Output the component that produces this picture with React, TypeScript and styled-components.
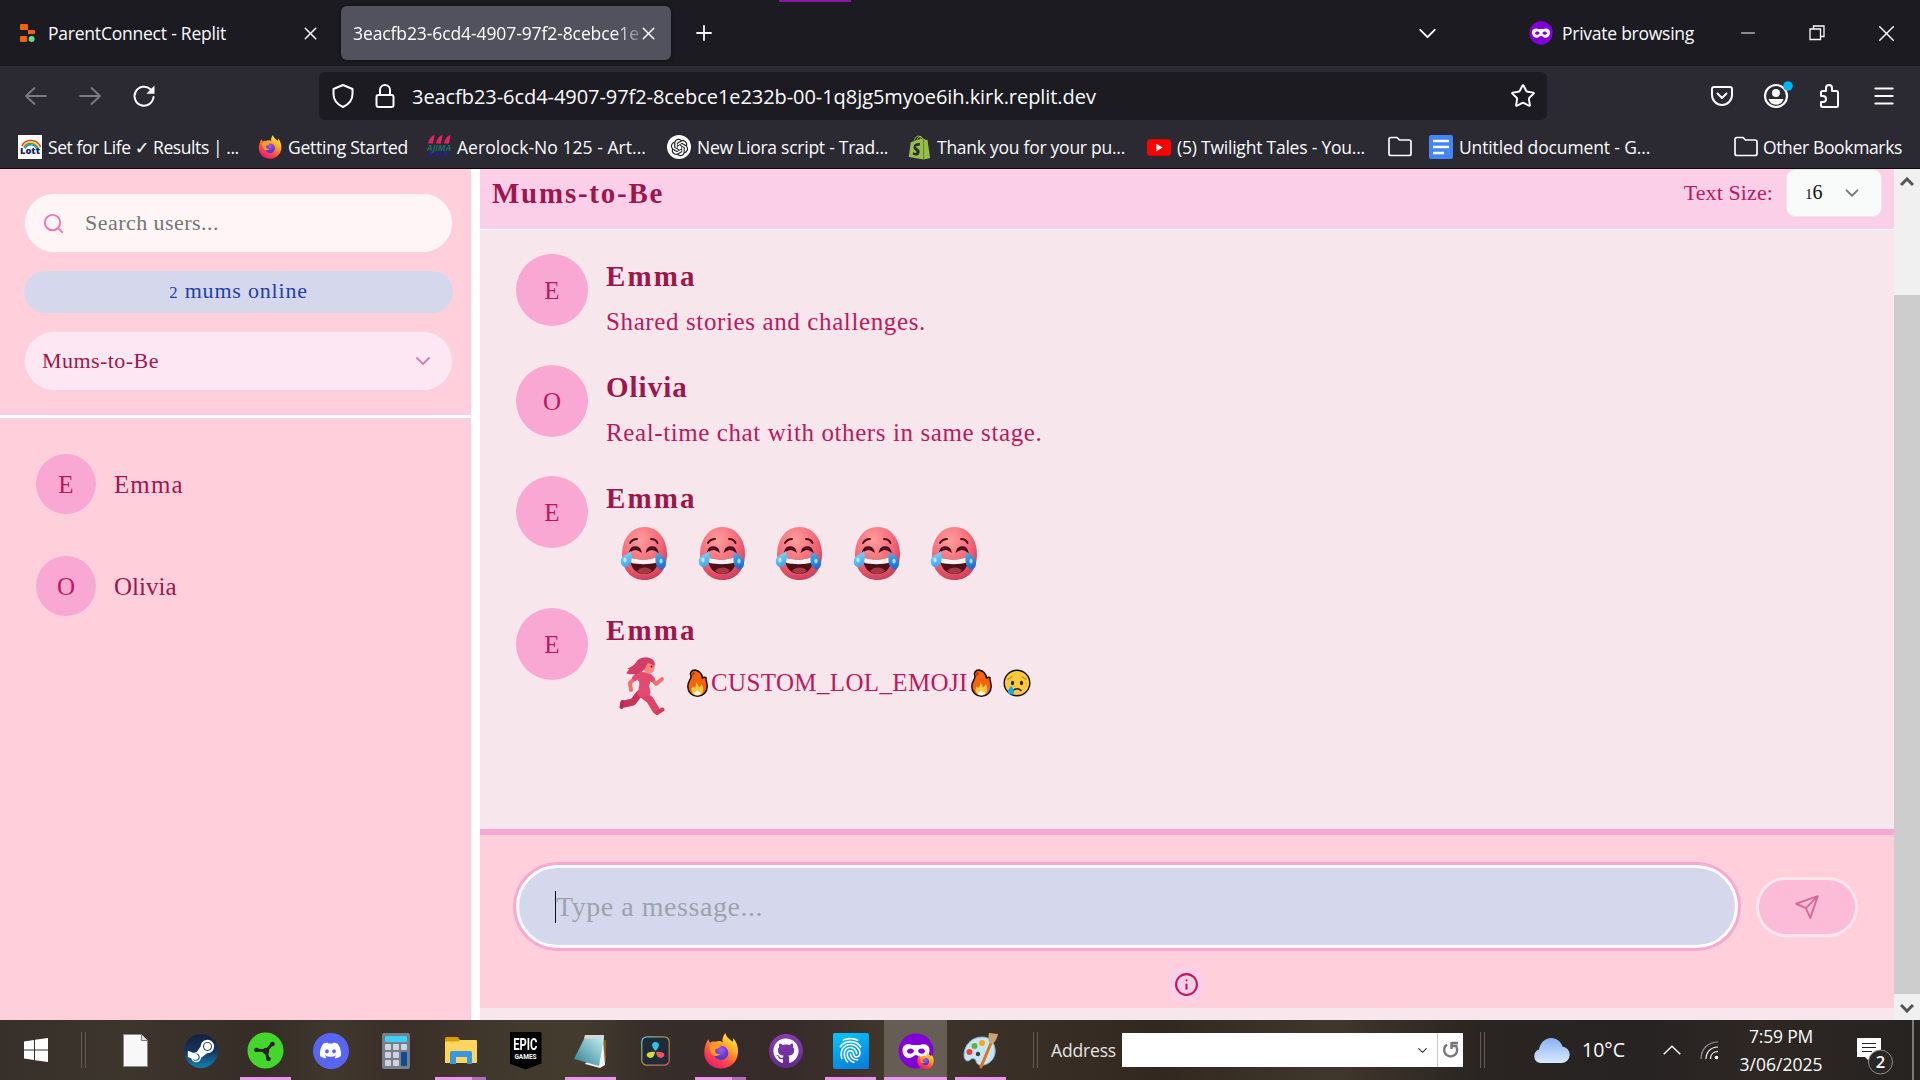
import React from "react";
import styled, { createGlobalStyle } from "styled-components";
import { ChevronDown, Search, Info, Plus, X, Minus, Menu, Star } from "lucide-react";
import { FaSteamSymbol, FaDiscord, FaGithub, FaShopify } from "react-icons/fa";
import { IoFingerPrint } from "react-icons/io5";
import { RiOpenaiFill } from "react-icons/ri";

const serif = "'Liberation Serif', serif";
const sans = "'Open Sans', 'DejaVu Sans', sans-serif";

const Global = createGlobalStyle`
  * { box-sizing: border-box; }
  body { margin: 0; overflow: hidden; background: #1c1b22; }
  svg { display: block; flex: none; }
`;

const Screen = styled.div`
  width: 1920px;
  height: 1080px;
  display: flex;
  flex-direction: column;
  overflow: hidden;
  font-family: ${sans};
`;

const Ui = styled.span<{ $ls?: number; $size?: number }>`
  font-size: ${(p) => p.$size ?? 17.5}px;
  letter-spacing: ${(p) => p.$ls ?? 0}px;
  line-height: 24px;
  white-space: nowrap;
  color: #fbfbfe;
`;

/* ---------- browser chrome ---------- */

const TabStrip = styled.header`
  height: 66px;
  flex: none;
  display: flex;
  align-items: center;
  background: #1c1b22;
  color: #fbfbfe;
`;

const Tab = styled.div<{ $active?: boolean }>`
  width: ${(p) => (p.$active ? 330 : 341)}px;
  height: 54px;
  padding-left: ${(p) => (p.$active ? 12 : 20)}px;
  display: flex;
  align-items: center;
  border-radius: 6px;
  background: ${(p) => (p.$active ? "#52525e" : "transparent")};
  box-shadow: ${(p) => (p.$active ? "0 0 4px rgba(0,0,0,.5)" : "none")};
`;

const TabTitle = styled(Ui)<{ $fade?: boolean }>`
  width: ${(p) => (p.$fade ? 286 : 248)}px;
  margin-left: ${(p) => (p.$fade ? 0 : 12)}px;
  margin-right: ${(p) => (p.$fade ? -1 : 4)}px;
  mask-image: ${(p) => (p.$fade ? "linear-gradient(90deg,#000 262px,rgba(0,0,0,.25) 286px)" : "none")};
`;

const NewTab = styled.div`
  margin-left: 21px;
  width: 54px;
`;

const PurpleMark = styled.div`
  align-self: flex-start;
  margin-left: 33px;
  width: 72px;
  height: 2px;
  background: #8a189e;
`;

const TabTools = styled.div`
  margin-left: auto;
  display: flex;
  align-items: center;
  padding-right: 21px;
`;

const Slot = styled.div<{ $w: number }>`
  width: ${(p) => p.$w}px;
  flex: none;
  display: flex;
  justify-content: center;
`;

const PrivateLabel = styled.div`
  display: flex;
  align-items: center;
  gap: 9px;
  margin: 0 41px 0 87px;
`;

const Toolbar = styled.div`
  height: 60px;
  flex: none;
  display: flex;
  align-items: center;
  padding: 6px 9px;
  background: #2b2a33;
  color: #fbfbfe;
`;

const NavButtons = styled.div`
  width: 310px;
  display: flex;
`;

const UrlBar = styled.div`
  width: 1228px;
  height: 48px;
  display: flex;
  align-items: center;
  padding: 0 11px 0 10px;
  border-radius: 6px;
  background: #1c1b22;
`;

const UrlText = styled(Ui)`
  flex: 1;
  margin-left: -1px;
  padding-top: 2px;
`;

const ToolbarEnd = styled.div`
  margin-left: auto;
  display: flex;
  align-items: center;
`;

const Bookmarks = styled.nav`
  height: 43px;
  flex: none;
  display: flex;
  align-items: center;
  padding: 0 18px;
  background: #2b2a33;
  border-bottom: 1px solid #0c0c0d;
`;

const Bookmark = styled.div<{ $w: number }>`
  width: ${(p) => p.$w}px;
  display: flex;
  align-items: center;
  gap: 6px;
`;

const BookmarkTail = styled.div`
  margin-left: auto;
  display: flex;
  align-items: center;
  gap: 5px;
`;

/* ---------- page ---------- */

const Page = styled.div`
  height: 851px;
  flex: none;
  display: flex;
  font-family: ${serif};
`;

const Sidebar = styled.aside`
  width: 480px;
  flex: none;
  border-right: 9px solid #fff;
  background: #ffd0dc;
`;

const Filters = styled.div`
  height: 249px;
  padding: 24px 18px 0 24px;
  border-bottom: 3px solid #fff;
  display: flex;
  flex-direction: column;
`;

const Pill = styled.div<{ $tone: "search" | "select" }>`
  height: 60px;
  display: flex;
  align-items: center;
  justify-content: ${(p) => (p.$tone === "select" ? "space-between" : "flex-start")};
  padding: 0 17px;
  border: 1px solid #fbd3e9;
  border-radius: 30px;
  background: ${(p) => (p.$tone === "search" ? "#fff5f6" : "#fce7f3")};
`;

const OnlineBadge = styled.div`
  height: 42px;
  margin: 18px 0 18px;
  display: flex;
  align-items: center;
  justify-content: center;
  border-radius: 21px;
  background: #d5d8ec;
`;

const Copy = styled.span<{ $size?: number; $ls?: number; $color?: string; $bold?: boolean }>`
  font-family: ${serif};
  font-size: ${(p) => p.$size ?? 22}px;
  letter-spacing: ${(p) => p.$ls ?? 0}px;
  color: ${(p) => p.$color ?? "#be185d"};
  font-weight: ${(p) => (p.$bold ? 700 : 400)};
  line-height: 30px;
  white-space: nowrap;
`;

const SmallDigit = styled.span`
  font-size: 0.76em;
`;

const SearchHint = styled(Copy)`
  margin-left: 20px;
`;

const Users = styled.div`
  display: flex;
  flex-direction: column;
  gap: 42px;
  padding: 36px;
`;

const UserRow = styled.div`
  display: flex;
  align-items: center;
  gap: 18px;
`;

const UserName = styled(Copy)`
  padding-top: 2px;
`;

const Avatar = styled.div<{ $size: number }>`
  width: ${(p) => p.$size}px;
  height: ${(p) => p.$size}px;
  flex: none;
  display: flex;
  align-items: center;
  justify-content: center;
  padding-top: 2px;
  border-radius: 50%;
  background: #f9a8d4;
  color: #be185d;
  font-size: 25px;
`;

const Main = styled.main`
  width: 1414px;
  display: flex;
  flex-direction: column;
  background: #f7e6eb;
`;

const RoomBar = styled.div`
  height: 61px;
  flex: none;
  display: flex;
  align-items: flex-start;
  padding: 0 12px;
  background: #fbcfe8;
  border-bottom: 1px solid #fff;
`;

const RoomTitle = styled(Copy)`
  margin: 9px 0 0;
`;

const SizeLabel = styled(Copy)`
  margin: 9px 13px 0 auto;
`;

const SizeSelect = styled.div`
  width: 96px;
  height: 48px;
  display: flex;
  align-items: center;
  justify-content: space-between;
  padding: 0 18px 0 18px;
  border: 1px solid #e5e7eb;
  border-radius: 9px;
  background: #f9fafa;
`;

const Messages = styled.div`
  height: 599px;
  flex: none;
  padding: 24px 36px 0;
  display: flex;
  flex-direction: column;
  gap: 19px;
`;

const Message = styled.article`
  display: flex;
  gap: 18px;
`;

const MessageText = styled.div`
  display: flex;
  flex-direction: column;
`;

const Author = styled.div`
  height: 43px;
  display: flex;
  align-items: center;
`;

const Body = styled.div<{ $tall?: boolean; $gap?: number; $pad?: number }>`
  height: ${(p) => (p.$tall ? 70 : 49)}px;
  display: flex;
  align-items: center;
  gap: ${(p) => p.$gap ?? 0}px;
  padding-left: ${(p) => p.$pad ?? 0}px;
`;

const EmojiLine = styled.div`
  display: flex;
  align-items: center;
  gap: 3px;
  margin: -6px 0 0 22px;
`;

const SadGap = styled.div`
  width: 5px;
`;

const Composer = styled.footer`
  height: 179px;
  flex: none;
  display: flex;
  flex-direction: column;
  align-items: center;
  border-top: 6px solid #f9a8d4;
  background: #ffd0dc;
`;

const ComposerRow = styled.div`
  width: 100%;
  display: flex;
  align-items: center;
  padding: 30px 36px 0 36px;
`;

const MessageInput = styled.div`
  width: 1222px;
  height: 83px;
  display: flex;
  align-items: center;
  padding-left: 36px;
  border: 3px solid #fff;
  border-radius: 42px;
  background: #d5d8ec;
  box-shadow: 0 0 0 3px #f9a8d4;
`;

const Caret = styled.i`
  width: 1px;
  height: 32px;
  background: #111;
`;

const SendButton = styled.div`
  width: 102px;
  height: 60px;
  margin-left: 18px;
  display: flex;
  align-items: center;
  justify-content: center;
  border: 3px solid #ffe6ee;
  border-radius: 30px;
  background: #fcbcd8;
`;

const InfoButton = styled.div`
  width: 36px;
  height: 36px;
  margin: 18px 2px 0 0;
  display: flex;
  align-items: center;
  justify-content: center;
  border-radius: 50%;
  background: #fbcfe8;
`;

const Scrollbar = styled.div`
  width: 26px;
  display: flex;
  flex-direction: column;
  align-items: center;
  justify-content: space-between;
  background: #f0f0f0;
`;

const ScrollEnd = styled.div<{ $h: number }>`
  height: ${(p) => p.$h}px;
  padding-top: 8px;
`;

const Thumb = styled.div`
  width: 26px;
  flex: 1;
  background: #cdcdcd;
`;

/* ---------- taskbar ---------- */

const Taskbar = styled.div`
  height: 60px;
  flex: none;
  display: flex;
  align-items: center;
  background: linear-gradient(90deg, #37302a 0, #3d362d 130px, #352c26 260px, #40382d 330px, #3b2f29 400px, #423a2d 520px, #433b2e 580px, #372d2a 650px, #362b29 790px, #41372b 890px, #3b3129 980px, #32281f 1160px, #40372c 1330px, #2a2522 1480px, #272322 1640px, #2e2724 1760px, #262321 1920px);
`;

const StartButton = styled.div`
  width: 81px;
  padding-left: 24px;
`;

const Separator = styled.div`
  width: 5px;
  flex: none;
  height: 36px;
  border: solid #635b53;
  border-width: 0 1px;
`;

const Apps = styled.div`
  display: flex;
  height: 60px;
  margin-left: 17px;
  margin-right: 20px;
`;

const TaskButton = styled.div<{ $active?: boolean }>`
  width: ${(p) => (p.$active ? 63 : 65)}px;
  margin: ${(p) => (p.$active ? "0 1px" : "0")};
  height: 60px;
  display: flex;
  flex-direction: column;
  align-items: center;
  background: ${(p) => (p.$active ? "#665e55" : "transparent")};
`;

const AppIcon = styled.div`
  height: 57px;
  padding-top: 4px;
  display: flex;
  align-items: center;
`;

const Running = styled.div<{ $kind: "one" | "many" | "active" }>`
  width: ${(p) => (p.$kind === "active" ? 63 : 51)}px;
  height: 3px;
  background: ${(p) => (p.$kind === "many" ? "linear-gradient(90deg,#ec95f0 37px,#b36cb9 37px)" : "#ec95f0")};
`;

const Round = styled.div<{ $bg: string; $size: number; $square?: boolean }>`
  width: ${(p) => p.$size}px;
  height: ${(p) => p.$size}px;
  display: flex;
  align-items: center;
  justify-content: center;
  border-radius: ${(p) => (p.$square ? "2px" : "50%")};
  background: ${(p) => p.$bg};
  color: #fff;
`;

const EpicBadge = styled.div`
  width: 32px;
  height: 38px;
  padding-top: 4px;
  display: flex;
  flex-direction: column;
  align-items: center;
  background: #000;
  color: #fff;
  clip-path: polygon(0 4%, 4% 0, 96% 0, 100% 4%, 100% 84%, 50% 100%, 0 84%);
  font: 700 17px/17px "Roboto", sans-serif;
`;

const EpicName = styled.span`
  transform: scaleX(0.66);
  white-space: nowrap;
`;

const EpicSub = styled.span`
  font-size: 6.5px;
  line-height: 8px;
`;

const Address = styled(Ui)`
  margin: 0 6px 0 13px;
  color: #e6e4e2;
`;

const AddressBox = styled.div`
  width: 341px;
  height: 34px;
  margin-right: 17px;
  display: flex;
  align-items: center;
  justify-content: flex-end;
  background: #fff;
`;

const Reload = styled.div`
  width: 26px;
  height: 34px;
  margin-left: 7px;
  display: flex;
  align-items: center;
  justify-content: center;
  border-left: 1px solid #c8c8c8;
`;

const Weather = styled.div`
  margin-left: 48px;
  width: 123px;
  display: flex;
  align-items: center;
  gap: 12px;
`;

const Clock = styled.div`
  width: 100px;
  display: flex;
  flex-direction: column;
  align-items: center;
  gap: 4px;
`;

const Notice = styled.div`
  margin-left: 25px;
  height: 60px;
  padding-top: 16px;
`;

const ShowDesktop = styled.div`
  width: 8px;
  height: 60px;
  margin-left: auto;
  border-left: 2px solid #7d7976;
`;

/* ---------- drawings ---------- */

const line = { fill: "none", stroke: "currentColor", strokeWidth: 2, strokeLinecap: "round" as const, strokeLinejoin: "round" as const };

const Replit = () => (
  <svg width="16" height="18" viewBox="0 0 16 18">
    <path fill="#f26207" d="M1 0h6a1 1 0 0 1 1 1v5H1a1 1 0 0 1-1-1V1a1 1 0 0 1 1-1zM8 6h6a1 1 0 0 1 1 1v2a1 1 0 0 1-1 1H8zM1 12h5a1 1 0 0 1 1 1v4a1 1 0 0 1-1 1H1a1 1 0 0 1-1-1v-4a1 1 0 0 1 1-1z" />
    <circle cx="11.600" cy="15" r="3" fill="#6bd98a" />
  </svg>
);
const Arrow = ({ flip }: { flip?: boolean }) => (
  <svg width="24" height="24" viewBox="0 0 24 24" color="#7c7b83">
    <path {...line} strokeWidth={1.8} d={flip ? "M2 12h20M13.500 4l8.500 8-8.500 8" : "M22 12H2M10.500 4 2 12l8.500 8"} />
  </svg>
);
const ReloadArrow = () => (
  <svg width="24" height="24" viewBox="0 0 24 24">
    <path {...line} d="M18.500 5.200A9.500 9.500 0 1 0 21.500 13" />
    <path fill="currentColor" d="M22.500 1.500v8.200h-8.200z" />
  </svg>
);
const Shield = () => (
  <svg width="26" height="26" viewBox="0 0 26 26">
    <path {...line} d="M13 2 22.500 6v5c0 6-4 10.500-9.500 13C7.500 21.500 3.500 17 3.500 11V6z" />
  </svg>
);
const Padlock = () => (
  <svg width="26" height="26" viewBox="0 0 26 26">
    <path {...line} d="M8 12V7a5 5 0 0 1 10 0v5M6.500 12h13a2 2 0 0 1 2 2v8a2 2 0 0 1-2 2h-13a2 2 0 0 1-2-2v-8a2 2 0 0 1 2-2z" />
  </svg>
);
const Pocket = () => (
  <svg width="24" height="24" viewBox="0 0 24 24">
    <path {...line} d="M4 3h16a2 2 0 0 1 2 2v6a10 10 0 0 1-20 0V5a2 2 0 0 1 2-2zM7.500 9.500 12 14l4.500-4.500" />
  </svg>
);
const Account = () => (
  <svg width="34" height="34" viewBox="0 0 34 34">
    <circle cx="17" cy="17" r="11" {...line} strokeWidth={2.2} />
    <circle cx="17" cy="14" r="4" fill="currentColor" />
    <path fill="currentColor" d="M9.500 20h15a7.800 7.800 0 0 1-15 0z" />
    <circle cx="29" cy="7" r="4.800" fill="#00b3f4" />
  </svg>
);
const Puzzle = () => (
  <svg width="26" height="26" viewBox="0 0 26 26">
    <path {...line} d="M4 13V9.500A1.500 1.500 0 0 1 5.500 8H9V5a3 3 0 0 1 6 0v3h4.500A1.500 1.500 0 0 1 21 9.500v13a1.500 1.500 0 0 1-1.500 1.500h-14A1.500 1.500 0 0 1 4 22.500V19h2a3 3 0 0 0 0-6z" />
  </svg>
);
const Folder = () => (
  <svg width="24" height="24" viewBox="0 0 24 24" color="#fbfbfe">
    <path {...line} strokeWidth={1.7} d="M3 2.500h6L11.500 5H21a2 2 0 0 1 2 2v11.500a2 2 0 0 1-2 2H3a2 2 0 0 1-2-2v-14a2 2 0 0 1 2-2z" />
  </svg>
);
const Restore = () => (
  <svg width="16" height="16" viewBox="0 0 16 16">
    <path fill="none" stroke="currentColor" strokeWidth="1.300" d="M1 4h10.500v10.500H1zM4.500 4V1H15v10.500h-3.500" />
  </svg>
);
const Mask = ({ size, fox }: { size: number; fox?: boolean }) => (
  <svg width={size} height={size} viewBox="0 0 36 36">
    <circle cx="18" cy="18" r="17.500" fill="#8000d7" />
    <path fill="#fff" fillRule="evenodd" d="M4.500 17c0-4.500 4-6.500 8-5.500 2.500.700 8.500.700 11 0 4-1 8 1 8 5.500 0 4.500-2.500 8-6.500 8-3.500 0-5-3-7-3s-3.500 3-7 3c-4 0-6.500-3.500-6.500-8zm4.500 1.200c.500 3.400 6 3.400 7-.2-1-3.200-6.500-3.200-7 .2zm11 -.2c1 3.600 6.500 3.600 7 .2-.5-3.400-6-3.400-7-.2z" />
    {fox && <g transform="translate(19 19) scale(.47)"><FirefoxShape /></g>}
  </svg>
);
const FirefoxShape = () => (
  <>
    <defs>
      <linearGradient id="foxBody" x1=".8" y1="0" x2=".2" y2="1">
        <stop offset="0" stopColor="#fff44f" /><stop offset=".35" stopColor="#ffa726" /><stop offset=".65" stopColor="#ff4f3f" /><stop offset="1" stopColor="#e8107f" />
      </linearGradient>
      <radialGradient id="foxGlobe" cx=".5" cy=".3"><stop offset="0" stopColor="#a05cf5" /><stop offset="1" stopColor="#5b38c8" /></radialGradient>
    </defs>
    <path fill="url(#foxBody)" d="M22.500 0c1 4.500 4 6 7.500 9 1-1 .5-3 0-4 4 4 5.800 9 5.500 15C35 29.500 27.500 36.500 18 36.500S.8 29.500.8 20C.8 15 2.500 10 5 6.500L6.500 10C8 9 10 8.500 12 9c3-1 6-1.500 8 1-1.500-3 .500-7.500 2.500-10z" />
    <circle cx="18" cy="20.500" r="7.500" fill="url(#foxGlobe)" />
    <path fill="#ff9a26" d="M5.500 13c3-2.500 7-2.500 12.500.500-1.500 2.500-5.500 2-6 4-.500 3 2 4.500 5 4-3 3.500-9 2.500-10-2.500-.500-2-.700-4-1.500-6z" />
  </>
);
const Firefox = ({ size }: { size: number }) => (
  <svg width={size} height={size} viewBox="0 0 36 37"><FirefoxShape /></svg>
);
const Lott = () => (
  <svg width="24" height="24" viewBox="0 0 24 24">
    <path fill="#fff" d="M0 0h24v24H0z" />
    <g fill="none" strokeWidth="1.500">
      <path stroke="#e53935" d="M4 11C7 4 19 3 22.500 12" /><path stroke="#fdd835" d="M5 12C8 5.500 18 5 21.500 13" /><path stroke="#43a047" d="M6 12.500C9 7 17 7 20.500 14" /><path stroke="#1e88e5" d="M7 13.500c3-5 9-5 12.500 1" />
    </g>
    <text x="2" y="19" fontFamily="Open Sans" fontWeight="800" fontSize="9.500" fill="#14245f" textLength="20">Lott</text>
  </svg>
);
const Ajima = () => (
  <svg width="24" height="24" viewBox="0 0 24 24">
    <path fill="#e91e63" d="M1 8.500C2 4 4 1 7.500 0 7 3 6.500 6 6 8.500zM9 8.500c1-4.500 3-7.500 6.500-8.500-.500 3-1 6-1.500 8.500zM17 8.500c1-4.500 3-7.500 6.500-8.500-.500 3-1 6-1.500 8.500z" />
    <text x="0" y="16" fontFamily="Open Sans" fontWeight="700" fontStyle="italic" fontSize="8.500" fill="#14746f" textLength="24">AJIMA</text>
    <path fill="#281ba6" d="M2 17.500h4c0 2-1 4-3 5-1-2-1.200-3-1-5zM9.500 17.500h4c0 2-1 4-3 5-1-2-1.200-3-1-5zM17 17.500h4c0 2-1 4-3 5-1-2-1.200-3-1-5z" />
  </svg>
);
const YouTube = () => (
  <svg width="24" height="17" viewBox="0 0 23 16"><rect width="23" height="16" rx="3" fill="#f00" /><path fill="#fff" d="m9 4.500 6 3.500-6 3.500z" /></svg>
);
const Docs = () => (
  <svg width="24" height="24" viewBox="0 0 24 24"><rect width="24" height="24" rx="2" fill="#4285f4" /><path stroke="#fff" strokeWidth="2.600" d="M4 6h16M4 12h16M4 18h11" /></svg>
);
const Laugh = () => (
  <svg width="48" height="54" viewBox="0 0 48 54">
    <defs>
      <radialGradient id="face" cx=".4" cy=".25" r=".8"><stop offset="0" stopColor="#ff9c9c" /><stop offset=".55" stopColor="#f76b79" /><stop offset="1" stopColor="#c93a58" /></radialGradient>
      <linearGradient id="tear" x1="0" y1="0" x2="1" y2="1"><stop offset="0" stopColor="#8fdcff" /><stop offset=".5" stopColor="#3fa5f0" /><stop offset="1" stopColor="#1763c9" /></linearGradient>
    </defs>
    <path fill="url(#face)" d="M24.500 0C38 0 47 12 47 27.500 47 43 38 53 24.500 53S2 43 2 27.500C2 12 11 0 24.500 0z" />
    <path fill="none" stroke="#4b1020" strokeWidth="2" strokeLinecap="round" d="M10 16c1.500-2.500 4-4 7-4M31 12c3 0 5.500 1.500 6.500 4" />
    <path fill="#7d1c30" stroke="#3d0b18" strokeWidth="1.600" strokeLinecap="round" d="M10 24.500c1.500-6 9-6 10.500-.5-3.500-2.500-7-2.300-10.500.500zM27 24c1.500-5.500 9-5.500 10.500.500-3.500-2.800-7-3-10.500-.500z" />
    <path fill="#4d1018" d="M10 30.500c9 3 20 3 28-1 1 10-4 17-13 17.500C16 47 10 41 10 30.500z" />
    <path fill="#fff2f0" d="M10.200 30.500c9 3 19.500 3 27.600-1 .1 3-.3 5-.8 6-8 2.200-18 2-25.500.500-.8-2-1.200-3.500-1.300-5.500z" />
    <path fill="#a83844" d="M17 44c4-4.500 11-4.500 15-.500-4 4.500-10.500 4.500-15 .500z" />
    <path fill="url(#tear)" d="M11 24c2 8 0 16-5.500 16C1 40-.5 34 2 30.500 4 28 8 27 11 24zM36 26c4 1 9.500 4 10 10 .3 5-5 8.500-8 4.500-3-3.500-3-9-2-14.500z" />
    <ellipse cx="5" cy="33" rx="1.600" ry="2.600" fill="#d3f2ff" opacity=".8" /><ellipse cx="41" cy="34" rx="1.600" ry="2.600" fill="#d3f2ff" opacity=".8" />
  </svg>
);
const Runner = () => (
  <svg width="46" height="58" viewBox="0 0 46 58">
    <g strokeLinecap="round" strokeLinejoin="round" fill="none">
      <path stroke="#c93358" strokeWidth="7" d="M20 37 14 45 5 47" />
      <path stroke="#b92c51" strokeWidth="4" d="M3.500 45 2.500 50" />
      <path stroke="#df4468" strokeWidth="7.500" d="M22 36l9 7 6 10" />
      <path stroke="#d23a5e" strokeWidth="4" d="m38 56 5.500-3.500" />
      <path stroke="#f0706f" strokeWidth="4" d="M16 21l-5 5 1 7" />
      <path stroke="#f0706f" strokeWidth="3.800" d="m33 22 4 5 6-5" />
      <path stroke="#e34a6f" strokeWidth="5.500" d="M18 19l-2 2M31 20l2 2" />
    </g>
    <path fill="#e34a6f" d="M17 16c5-1.500 11-1.500 15 1.500 1 4-1 8-2 12 1 3 2 5 1 8-4 2-8 2-12 0 0-5 2-9 1-13-2-2-4-5-3-8.500z" />
    <path fill="#f98a80" d="M24 5c5-3 11 0 11.500 5 .2 4-2.500 7-6.500 6.500-3-.5-5.500-4-5-11.500z" />
    <path fill="#d43c69" d="M35 4C31-1 22-1 18 4c-3 4-5 6-10 7.500 2 .5 2 .5 2 1-1 1.500-2 2-2.500 4C12 18 20 18 25 13c2-2 2-5 4-7 2.500 1 5 1 6 4 1-2 1-4 0-6z" />
    <circle cx="32.500" cy="9.500" r=".9" fill="#4b1020" />
  </svg>
);
const Fire = () => (
  <svg width="21" height="28" viewBox="0 0 21 28">
    <path fill="#f7630c" stroke="#111" strokeWidth="1.500" d="M8 1c5 1 7 4 7.500 8 1.500-.5 2-1.500 3.500-.5-.5 2.500 1.200 5 1.200 9C20.200 23 16 27.200 10.500 27.200S.8 23 .8 17.500C.8 12 4.500 10.500 4 7 2.500 4.500 4 1 8 1z" />
    <path fill="#c33a06" d="M5 4c1-2 3-1 3 .500S5.500 6 5 8z" />
    <path fill="#ffc83d" d="M9 13c2 2 2.500 4 3 5.500 1-.5 2-2 2.500-3.500 3 4 2.500 11-4 11.500-6 0-7-6-5-9.500l1.500 2C8.500 18 9.500 16 9 13z" />
    <path fill="#fff" d="M7 24c1-1.500 2-1 3-2.500 1 1.500 3 1 4 2.500-1.500 3-5.500 3-7 0z" />
  </svg>
);
const Sad = () => (
  <svg width="28" height="28" viewBox="0 0 28 28">
    <circle cx="14" cy="14" r="12.800" fill="#ffc83d" stroke="#111" strokeWidth="1.400" />
    <path fill="none" stroke="#c98a1c" strokeWidth="1.400" strokeLinecap="round" d="M5 10c1.500-.3 3-1.200 3.800-2.500M23 10c-1.500-.3-3-1.200-3.800-2.500" />
    <ellipse cx="9.500" cy="14" rx="1.500" ry="2.200" fill="#222" /><ellipse cx="18.500" cy="14" rx="1.500" ry="2.200" fill="#222" />
    <path fill="none" stroke="#222" strokeWidth="1.500" strokeLinecap="round" d="M10 21.500c2-2.500 6-2.500 8 0" />
    <path fill="#16a9f0" d="M8 17c2 2.500 3 4 3 5.500a3 3 0 0 1-6 0C5 21 6.500 19 8 17z" />
  </svg>
);
const Plane = () => (
  <svg width="26" height="26" viewBox="0 0 24 24" color="#d26d98">
    <path {...line} strokeWidth={1.8} d="m22 2-7 20-4-9-9-4zM22 2 11 13" />
  </svg>
);
const ScrollArrow = ({ down }: { down?: boolean }) => (
  <svg width="14" height="11" viewBox="0 0 14 11">
    <path fill="none" stroke="#555" strokeWidth="3" d={down ? "m1 3 6 6 6-6" : "m1 8 6-6 6 6"} />
  </svg>
);
const Windows = () => (
  <svg width="24" height="24" viewBox="0 0 24 24"><path fill="#fff" d="M0 3.500 10 2v9.500H0zM11 1.800 24 0v11.500H11zM0 12.500h10V22L0 20.500zM11 12.500h13V24l-13-1.800z" /></svg>
);
const Paper = () => (
  <svg width="25" height="33" viewBox="0 0 25 33"><path fill="#f8f8f8" stroke="#8b8b8b" d="M.5.500h18l6 6v26H.5z" /><path fill="#e1e1e1" stroke="#777" d="M18.500.500v6h6" /></svg>
);
const Razer = () => (
  <svg width="37" height="37" viewBox="0 0 37 37">
    <circle cx="18.500" cy="18.500" r="18" fill="#44d62c" />
    <path fill="none" stroke="#222" strokeWidth="3" strokeLinecap="round" d="m9 18 10 1 6-7M19 18.500 21 27" />
    <circle cx="9.500" cy="18" r="2.300" fill="#222" /><circle cx="25.500" cy="12" r="2.300" fill="#222" /><circle cx="21.500" cy="27" r="2.300" fill="#222" /><circle cx="19" cy="19" r="3.200" fill="#222" />
  </svg>
);
const Calculator = () => (
  <svg width="28" height="36" viewBox="0 0 28 36">
    <rect width="28" height="36" rx="2" fill="#77808a" /><rect x="3" y="3" width="22" height="6" rx="1" fill="#3fd0f5" />
    <g fill="#cdd4de">{[11, 19, 27].map((y) => [3, 11].map((x) => <rect key={`${x}-${y}`} x={x} y={y} width="6" height="6" rx="1" />))}<rect x="19" y="11" width="6" height="6" rx="1" /></g>
    <rect x="19" y="19" width="6" height="14" rx="1" fill="#134a92" />
  </svg>
);
const Explorer = () => (
  <svg width="32" height="27" viewBox="0 0 32 27">
    <path fill="#d99a08" d="M1 0h12l2 3v4H0V1z" /><path fill="#ffd55f" d="M0 4.500h13L15 3h16a1 1 0 0 1 1 1v21a1 1 0 0 1-1 1H0z" />
    <path fill="#3b97dc" d="M5 27V16a2 2 0 0 1 2-2h18a2 2 0 0 1 2 2v11h-5v-7H11v7z" />
  </svg>
);
const Notepad = () => (
  <svg width="34" height="34" viewBox="0 0 34 34">
    <defs><linearGradient id="np" x1="0" y1="1" x2="1" y2="0"><stop offset="0" stopColor="#2b7f92" /><stop offset="1" stopColor="#c7eef3" /></linearGradient></defs>
    <path fill="#8a5a1c" d="m27 6 5 0v22l-5 2z" /><path fill="#eef4f5" d="m29 4 2 27-5 3-15-4z" /><path fill="url(#np)" d="M11 3 30 4 25 32 0 25z" /><path fill="#d8d8d8" d="M11 1h19v3.500H10z" />
  </svg>
);
const Resolve = () => (
  <svg width="29" height="30" viewBox="0 0 29 30">
    <defs><linearGradient id="rb" x1="0" y1="0" x2="1" y2="1"><stop offset="0" stopColor="#5dc7e0" /><stop offset=".5" stopColor="#a5963d" /><stop offset="1" stopColor="#e0575a" /></linearGradient></defs>
    <rect x=".8" y=".8" width="27.400" height="28.400" rx="5" fill="#202b38" stroke="url(#rb)" strokeWidth="1.200" />
    <path fill="#35c2e8" d="M14.500 15c-5-5-4-9 0-9s5 4 0 9z" /><path fill="#d6dc3e" d="M14 16c-1 6-4 7-7 5s-1-6 7-5z" /><path fill="#f0555b" d="M15 16c1 6 4 7 7 5s1-6-7-5z" />
  </svg>
);
const Paint = () => (
  <svg width="36" height="37" viewBox="0 0 36 37">
    <path fill="#c9e4f3" stroke="#86b5d2" d="M19 5C8 5 1 14 1 23c0 6 4 7 6 5s5-2 6 1c1 4 4 5 8 4 8-2 12-9 11-16C31 9 26 5 19 5z" />
    <circle cx="6.500" cy="20" r="3" fill="#e8433c" /><circle cx="11.500" cy="14" r="3" fill="#5fb441" /><circle cx="19" cy="11" r="3" fill="#f6a81b" /><circle cx="15" cy="22" r="2.200" fill="#33404a" />
    <path stroke="#d9771e" strokeWidth="3" strokeLinecap="round" d="M28 11 18 35" /><path fill="#c9a273" d="m26 1 9 1c-1 5-3 9-7 10-3-2-3-6-2-11z" />
  </svg>
);
const Cloud = () => (
  <svg width="37" height="25" viewBox="0 0 37 25">
    <defs><linearGradient id="cl" x1="0" y1="0" x2="0" y2="1"><stop offset="0" stopColor="#86b2f5" /><stop offset="1" stopColor="#dbe9ff" /></linearGradient></defs>
    <path fill="url(#cl)" d="M7 25a7 7 0 0 1-1-13.500C7 5 12 0 18 0s10 4 11.500 8.500A8.300 8.300 0 0 1 29 25z" />
  </svg>
);
const TrayUp = () => (
  <svg width="18" height="10" viewBox="0 0 18 10"><path fill="none" stroke="#fff" strokeWidth="1.400" d="m.7 9.300 8.300-8 8.300 8" /></svg>
);
const Wifi = () => (
  <svg width="19" height="19" viewBox="0 0 19 19" fill="none" stroke="#fff" strokeWidth="1.200">
    <path opacity=".5" d="M1 18C1 8 8 1 18 1" /><path d="M6 18c0-7 5-12 12-12M10.500 18c0-4.500 3-7.500 7.500-7.500" /><circle cx="16.500" cy="16.500" r="1.200" fill="#fff" />
  </svg>
);
const NoticeIcon = () => (
  <svg width="38" height="40" viewBox="0 0 38 40">
    <path fill="#fff" d="M1 2h24v19H14v5l-5-5H1z" /><path stroke="#222" strokeWidth="1.200" d="M6 7.500h14M6 11.500h14M6 15.500h10" />
    <circle cx="24.500" cy="26" r="12" fill="#2b2928" stroke="#8e8b89" /><text x="24.500" y="32" fill="#fff" fontFamily="Open Sans" fontSize="16.500" fontWeight="600" textAnchor="middle">2</text>
  </svg>
);
const ReloadGlyph = () => (
  <svg width="18" height="19" viewBox="0 0 18 19">
    <path fill="none" stroke="#777" strokeWidth="2.400" d="M5 3.500A6.500 6.500 0 1 0 14.500 6M10 5h5.500M9.500 1v7M9.500 2H16" strokeDasharray="none" />
  </svg>
);

/* ---------- data ---------- */

const bookmarks = [
  { icon: <Lott />, label: "Set for Life ✓ Results | ...", w: 240, ls: -0.42 },
  { icon: <Firefox size={24} />, label: "Getting Started", w: 169, ls: -0.25 },
  { icon: <Ajima />, label: "Aerolock-No 125 - Art...", w: 240, ls: 0.04 },
  { icon: <Round $bg="#fff" $size={24}><RiOpenaiFill size={21} color="#202123" /></Round>, label: "New Liora script - Trad...", w: 240, ls: -0.25 },
  { icon: <Slot $w={24}><FaShopify size={25} color="#95bf47" /></Slot>, label: "Thank you for your pu...", w: 240, ls: -0.26 },
  { icon: <Slot $w={24}><YouTube /></Slot>, label: "(5) Twilight Tales - You...", w: 241, ls: -0.22 },
  { icon: <Folder />, label: "", w: 41, ls: 0 },
  { icon: <Docs />, label: "Untitled document - G...", w: 230, ls: -0.14 },
];

type Kind = "one" | "many" | "active";
const apps: { id: string; icon: React.ReactNode; run?: Kind }[] = [
  { id: "paper", icon: <Paper /> },
  { id: "steam", icon: <Round $bg="linear-gradient(#14203f,#16345f 50%,#1282b4)" $size={34}><FaSteamSymbol size={30} /></Round> },
  { id: "razer", icon: <Razer />, run: "one" },
  { id: "discord", icon: <Round $bg="#5865f2" $size={36}><FaDiscord size={23} /></Round> },
  { id: "calc", icon: <Calculator /> },
  { id: "explorer", icon: <Explorer />, run: "many" },
  { id: "epic", icon: <EpicBadge><EpicName>EPIC</EpicName><EpicSub>GAMES</EpicSub></EpicBadge> },
  { id: "notepad", icon: <Notepad />, run: "one" },
  { id: "resolve", icon: <Resolve /> },
  { id: "firefox", icon: <Firefox size={36} />, run: "many" },
  { id: "github", icon: <Round $bg="linear-gradient(#8c3bb0,#5f2a91)" $size={34}><FaGithub size={26} /></Round> },
  { id: "finger", icon: <Round $bg="linear-gradient(160deg,#00c8ff,#0a78d8)" $size={36} $square><IoFingerPrint size={27} /></Round>, run: "one" },
  { id: "private", icon: <Mask size={36} fox />, run: "active" },
  { id: "paint", icon: <Paint />, run: "one" },
];

const Name = ({ who }: { who: "Emma" | "Olivia" }) => (
  <Author><Copy $bold $size={29} $ls={who === "Emma" ? 2.1 : 1} $color="#9d174d">{who}</Copy></Author>
);

export default function App() {
  return (
    <Screen>
      <Global />
      <TabStrip>
        <Tab>
          <Replit />
          <TabTitle $ls={-0.22}>ParentConnect - Replit</TabTitle>
          <X size={21} strokeWidth={1.7} />
        </Tab>
        <Tab $active>
          <TabTitle $fade $ls={-0.1}>3eacfb23-6cd4-4907-97f2-8cebce1e</TabTitle>
          <X size={21} strokeWidth={1.7} />
        </Tab>
        <NewTab><Plus size={24} strokeWidth={1.8} /></NewTab>
        <PurpleMark />
        <TabTools>
          <ChevronDown size={29} strokeWidth={1.6} />
          <PrivateLabel><Mask size={24} /><Ui $ls={-0.26}>Private browsing</Ui></PrivateLabel>
          <Slot $w={26}><Minus size={22} strokeWidth={1.3} /></Slot>
          <Slot $w={112}><Restore /></Slot>
          <Slot $w={26}><X size={27} strokeWidth={1.3} /></Slot>
        </TabTools>
      </TabStrip>
      <Toolbar>
        <NavButtons>
          <Slot $w={54}><Arrow /></Slot><Slot $w={54}><Arrow flip /></Slot><Slot $w={54}><ReloadArrow /></Slot>
        </NavButtons>
        <UrlBar>
          <Slot $w={27}><Shield /></Slot>
          <Slot $w={57}><Padlock /></Slot>
          <UrlText $size={20} $ls={-0.06}>3eacfb23-6cd4-4907-97f2-8cebce1e232b-00-1q8jg5myoe6ih.kirk.replit.dev</UrlText>
          <Star size={26} strokeWidth={1.8} />
        </UrlBar>
        <ToolbarEnd>
          <Slot $w={54}><Pocket /></Slot><Slot $w={54}><Account /></Slot><Slot $w={54}><Puzzle /></Slot><Slot $w={54}><Menu size={26} strokeWidth={1.8} /></Slot>
        </ToolbarEnd>
      </Toolbar>
      <Bookmarks>
        {bookmarks.map((b) => (
          <Bookmark key={b.w + b.label} $w={b.w}>{b.icon}<Ui $ls={b.ls}>{b.label}</Ui></Bookmark>
        ))}
        <BookmarkTail><Folder /><Ui $ls={-0.35}>Other Bookmarks</Ui></BookmarkTail>
      </Bookmarks>

      <Page>
        <Sidebar>
          <Filters>
            <Pill $tone="search">
              <Search size={23} strokeWidth={2} color="#f472b6" />
              <SearchHint $ls={0.46} $color="#757575">Search users...</SearchHint>
            </Pill>
            <OnlineBadge><Copy $ls={0.8} $color="#1e40af"><SmallDigit>2</SmallDigit> mums online</Copy></OnlineBadge>
            <Pill $tone="select">
              <Copy $ls={0.45} $color="#9d174d">Mums-to-Be</Copy>
              <ChevronDown size={24} color="#d283a8" />
            </Pill>
          </Filters>
          <Users>
            <UserRow><Avatar $size={60}>E</Avatar><UserName $size={25} $ls={1.1} $color="#9d174d">Emma</UserName></UserRow>
            <UserRow><Avatar $size={60}>O</Avatar><UserName $size={25} $color="#9d174d">Olivia</UserName></UserRow>
          </Users>
        </Sidebar>

        <Main>
          <RoomBar>
            <RoomTitle as="h1" $bold $size={29} $ls={1.75} $color="#9d174d">Mums-to-Be</RoomTitle>
            <SizeLabel $ls={0.1}>Text Size:</SizeLabel>
            <SizeSelect><Copy $size={20} $color="#111"><SmallDigit>1</SmallDigit>6</Copy><ChevronDown size={22} color="#7d7d7d" /></SizeSelect>
          </RoomBar>
          <Messages>
            <Message>
              <Avatar $size={72}>E</Avatar>
              <MessageText><Name who="Emma" /><Body><Copy $size={25} $ls={0.62}>Shared stories and challenges.</Copy></Body></MessageText>
            </Message>
            <Message>
              <Avatar $size={72}>O</Avatar>
              <MessageText><Name who="Olivia" /><Body><Copy $size={25} $ls={0.6}>Real-time chat with others in same stage.</Copy></Body></MessageText>
            </Message>
            <Message>
              <Avatar $size={72}>E</Avatar>
              <MessageText><Name who="Emma" /><Body $tall $gap={29.6} $pad={14}>{[0, 1, 2, 3, 4].map((i) => <Laugh key={i} />)}</Body></MessageText>
            </Message>
            <Message>
              <Avatar $size={72}>E</Avatar>
              <MessageText>
                <Name who="Emma" />
                <Body $tall $pad={13}>
                  <Runner />
                  <EmojiLine><Fire /><Copy $size={25} $ls={0.36}>CUSTOM_LOL_EMOJI</Copy><Fire /><SadGap /><Sad /></EmojiLine>
                </Body>
              </MessageText>
            </Message>
          </Messages>
          <Composer>
            <ComposerRow>
              <MessageInput><Caret /><Copy $size={28} $ls={0.54} $color="#9ca3af">Type a message...</Copy></MessageInput>
              <SendButton><Plane /></SendButton>
            </ComposerRow>
            <InfoButton><Info size={25} color="#be185d" /></InfoButton>
          </Composer>
        </Main>

        <Scrollbar>
          <ScrollEnd $h={126}><ScrollArrow /></ScrollEnd>
          <Thumb />
          <ScrollEnd $h={26}><ScrollArrow down /></ScrollEnd>
        </Scrollbar>
      </Page>

      <Taskbar>
        <StartButton><Windows /></StartButton>
        <Separator />
        <Apps>
          {apps.map((a) => (
            <TaskButton key={a.id} $active={a.run === "active"}>
              <AppIcon>{a.icon}</AppIcon>
              {a.run && <Running $kind={a.run} />}
            </TaskButton>
          ))}
        </Apps>
        <Separator />
        <Address $ls={-0.16}>Address</Address>
        <AddressBox>
          <ChevronDown size={15} color="#444" strokeWidth={2} />
          <Reload><ReloadGlyph /></Reload>
        </AddressBox>
        <Separator />
        <Weather><Cloud /><Ui $size={19.5}>10°C</Ui></Weather>
        <Slot $w={32}><TrayUp /></Slot>
        <Slot $w={43}><Wifi /></Slot>
        <Clock><Ui $ls={-0.21}>7:59 PM</Ui><Ui>3/06/2025</Ui></Clock>
        <Notice><NoticeIcon /></Notice>
        <ShowDesktop />
      </Taskbar>
    </Screen>
  );
}
